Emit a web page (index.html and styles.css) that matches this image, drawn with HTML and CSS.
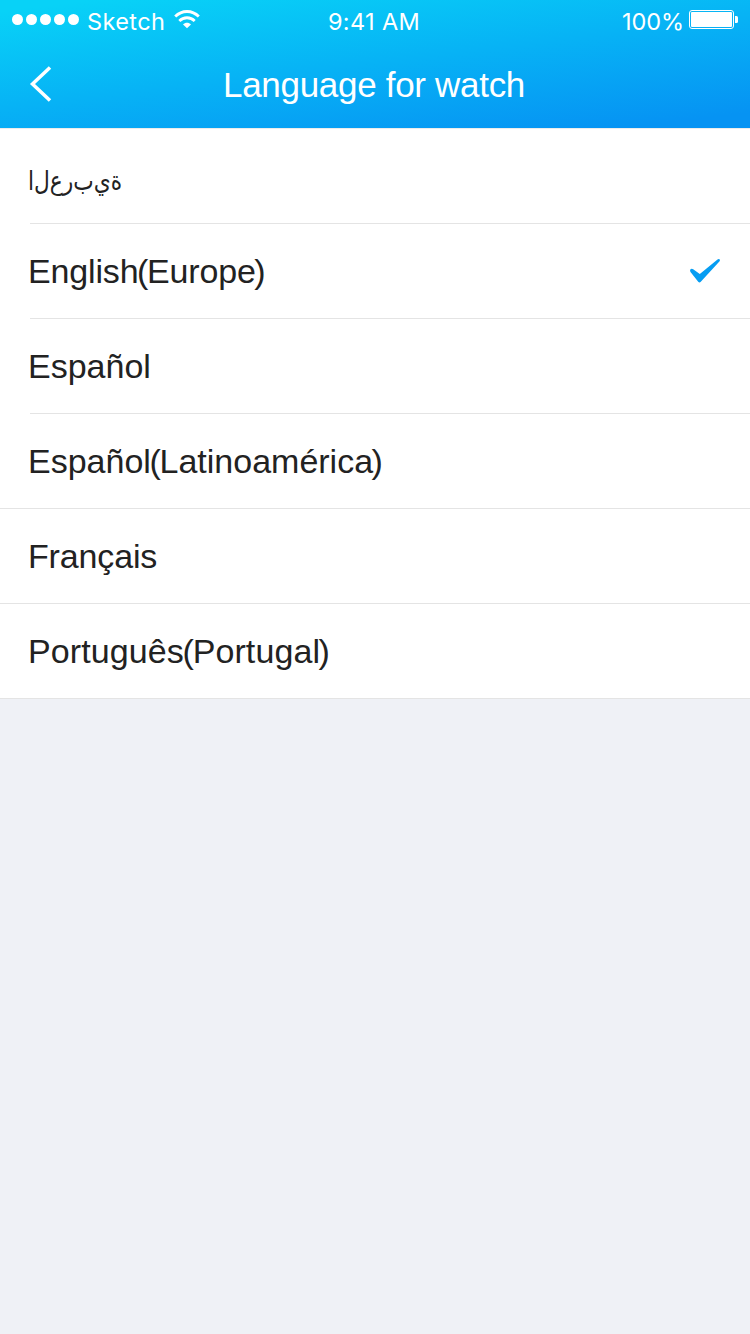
FILE: index.html
```html
<!DOCTYPE html>
<html lang="en">
<head>
<meta charset="utf-8">
<title>Language for watch</title>
<link rel="stylesheet" href="styles.css">
</head>
<body>
<header class="header">
  <div class="status">
    <div class="status-left">
      <svg class="dots" width="68" height="12" viewBox="0 0 68 12" fill="#fff"><circle cx="5.5" cy="6.500" r="5.500"/><circle cx="19.5" cy="6.500" r="5.500"/><circle cx="33.5" cy="6.500" r="5.500"/><circle cx="47.5" cy="6.500" r="5.500"/><circle cx="61.5" cy="6.500" r="5.500"/></svg>
      <span class="carrier">Sketch</span>
      <svg class="wifi" width="26" height="19" viewBox="0 0 26 19"><g fill="none" stroke="#fff" stroke-width="2.8"><path d="M1.2 6.6C7.8 -.2 18.200 -.2 24.800 6.600"/><path d="M5.300 10.900C9.600 6.700 16.400 6.700 20.700 10.900"/></g><path d="M13 18.300L9 14.400C11.200 12.200 14.800 12.200 17 14.400Z" fill="#fff"/></svg>
    </div>
    <span class="time">9:41 AM</span>
    <div class="status-right">
      <span class="percent">100%</span>
      <svg class="battery" width="49" height="19" viewBox="0 0 49 19"><rect x=".5" y=".5" width="44" height="18" rx="2.500" fill="none" stroke="#fff"/><rect x="2" y="2" width="41" height="15" rx="1" fill="#fff"/><path d="M46 6h1.500q1.500 0 1.500 1.500v4q0 1.500-1.500 1.500H46z" fill="#fff"/></svg>
    </div>
  </div>
  <div class="navbar">
    <svg class="back" width="24" height="38" viewBox="0 0 24 38"><path d="M22 2.500L4.500 19L22 35.500" fill="none" stroke="#fff" stroke-width="3.500"/></svg>
    <h1 class="title">Language for watch</h1>
  </div>
</header>
<ul class="list">
  <li class="row inset"><span class="label arabic" lang="ar">ا&zwnj;ل&zwnj;ع&zwnj;ر&zwnj;ب&zwnj;ي&zwnj;ة</span></li>
  <li class="row inset"><span class="label english">English<span class="paren">(</span>Europe<span class="paren">)</span></span>
    <svg class="check" width="32" height="26" viewBox="0 0 32 26"><path d="M1.300 11.500Q2.500 10 4.200 11.200L10.800 16L28.500 1.400Q29.600 .6 30.600 1.300Q31.300 2.300 30.600 3.300L11.800 23.800Q10.500 25.300 9.200 23.800L1.500 14Q.7 12.700 1.300 11.500Z" fill="#069df2"/></svg></li>
  <li class="row inset"><span class="label">Español</span></li>
  <li class="row"><span class="label">Español<span class="paren">(</span>Latinoamérica<span class="paren">)</span></span></li>
  <li class="row"><span class="label french">Français</span></li>
  <li class="row"><span class="label portuguese">Português<span class="paren">(</span>Portugal<span class="paren">)</span></span></li>
</ul>
</body>
</html>
```
FILE: styles.css
```css
* { box-sizing: border-box; }
body {
  margin: 0;
  background: #eff1f6;
  font-family: "Liberation Sans", Arial, sans-serif;
  color: #222;
}
.header {
  height: 128px;
  color: #fff;
  background: linear-gradient(173deg, #08d2f7 5%, #0693f3 93%);
}
.status {
  display: grid;
  grid-template-columns: 1fr auto 1fr;
  height: 40px;
  font: 23.5px/28px Inter, sans-serif;
  font-weight: 400;
  padding: 8px 12px 0;
}
.status-left, .status-right { display: flex; align-items: flex-start; }
.status-right { justify-content: flex-end; }
.dots { margin-top: 5px; }
.carrier { width: 80px; margin-left: 7px; letter-spacing: .4px; }
.wifi { margin: 2px 0 0 7px; }
.time { margin-right: 2px; letter-spacing: .35px; }
.percent { letter-spacing: -.1px; }
.battery { margin: 2px 0 0 5px; }
.navbar { display: flex; align-items: center; height: 88px; padding-left: 28px; }
.title {
  flex: 1;
  margin: 2px 54px 0 0;
  text-align: center;
  font-size: 35px;
  font-weight: 400;
  line-height: 40px;
  letter-spacing: -.3px;
}
.list {
  list-style: none;
  margin: 0;
  padding: 0;
  background: #fff;
  border-top: 1px solid #ececec;
}
.row {
  display: flex;
  align-items: center;
  justify-content: space-between;
  height: 95px;
  padding: 0 29px 0 28px;
  border-bottom: 1px solid #e4e4e4;
}
.inset { margin-left: 30px; padding-left: 0; }
.inset .label { margin-left: -2px; }
.label { font-size: 34px; line-height: 40px; }
.english { letter-spacing: -.15px; }
.french { letter-spacing: -.15px; }
.portuguese { letter-spacing: .1px; }
.paren { margin: 0 -1.2px 0 -1.5px; }
.arabic {
  padding-top: 10px;
  font-family: "DejaVu Sans", sans-serif;
  font-size: 26px;
  direction: ltr;
  unicode-bidi: bidi-override;
  transform: scaleX(.835);
  transform-origin: left center;
}
```
